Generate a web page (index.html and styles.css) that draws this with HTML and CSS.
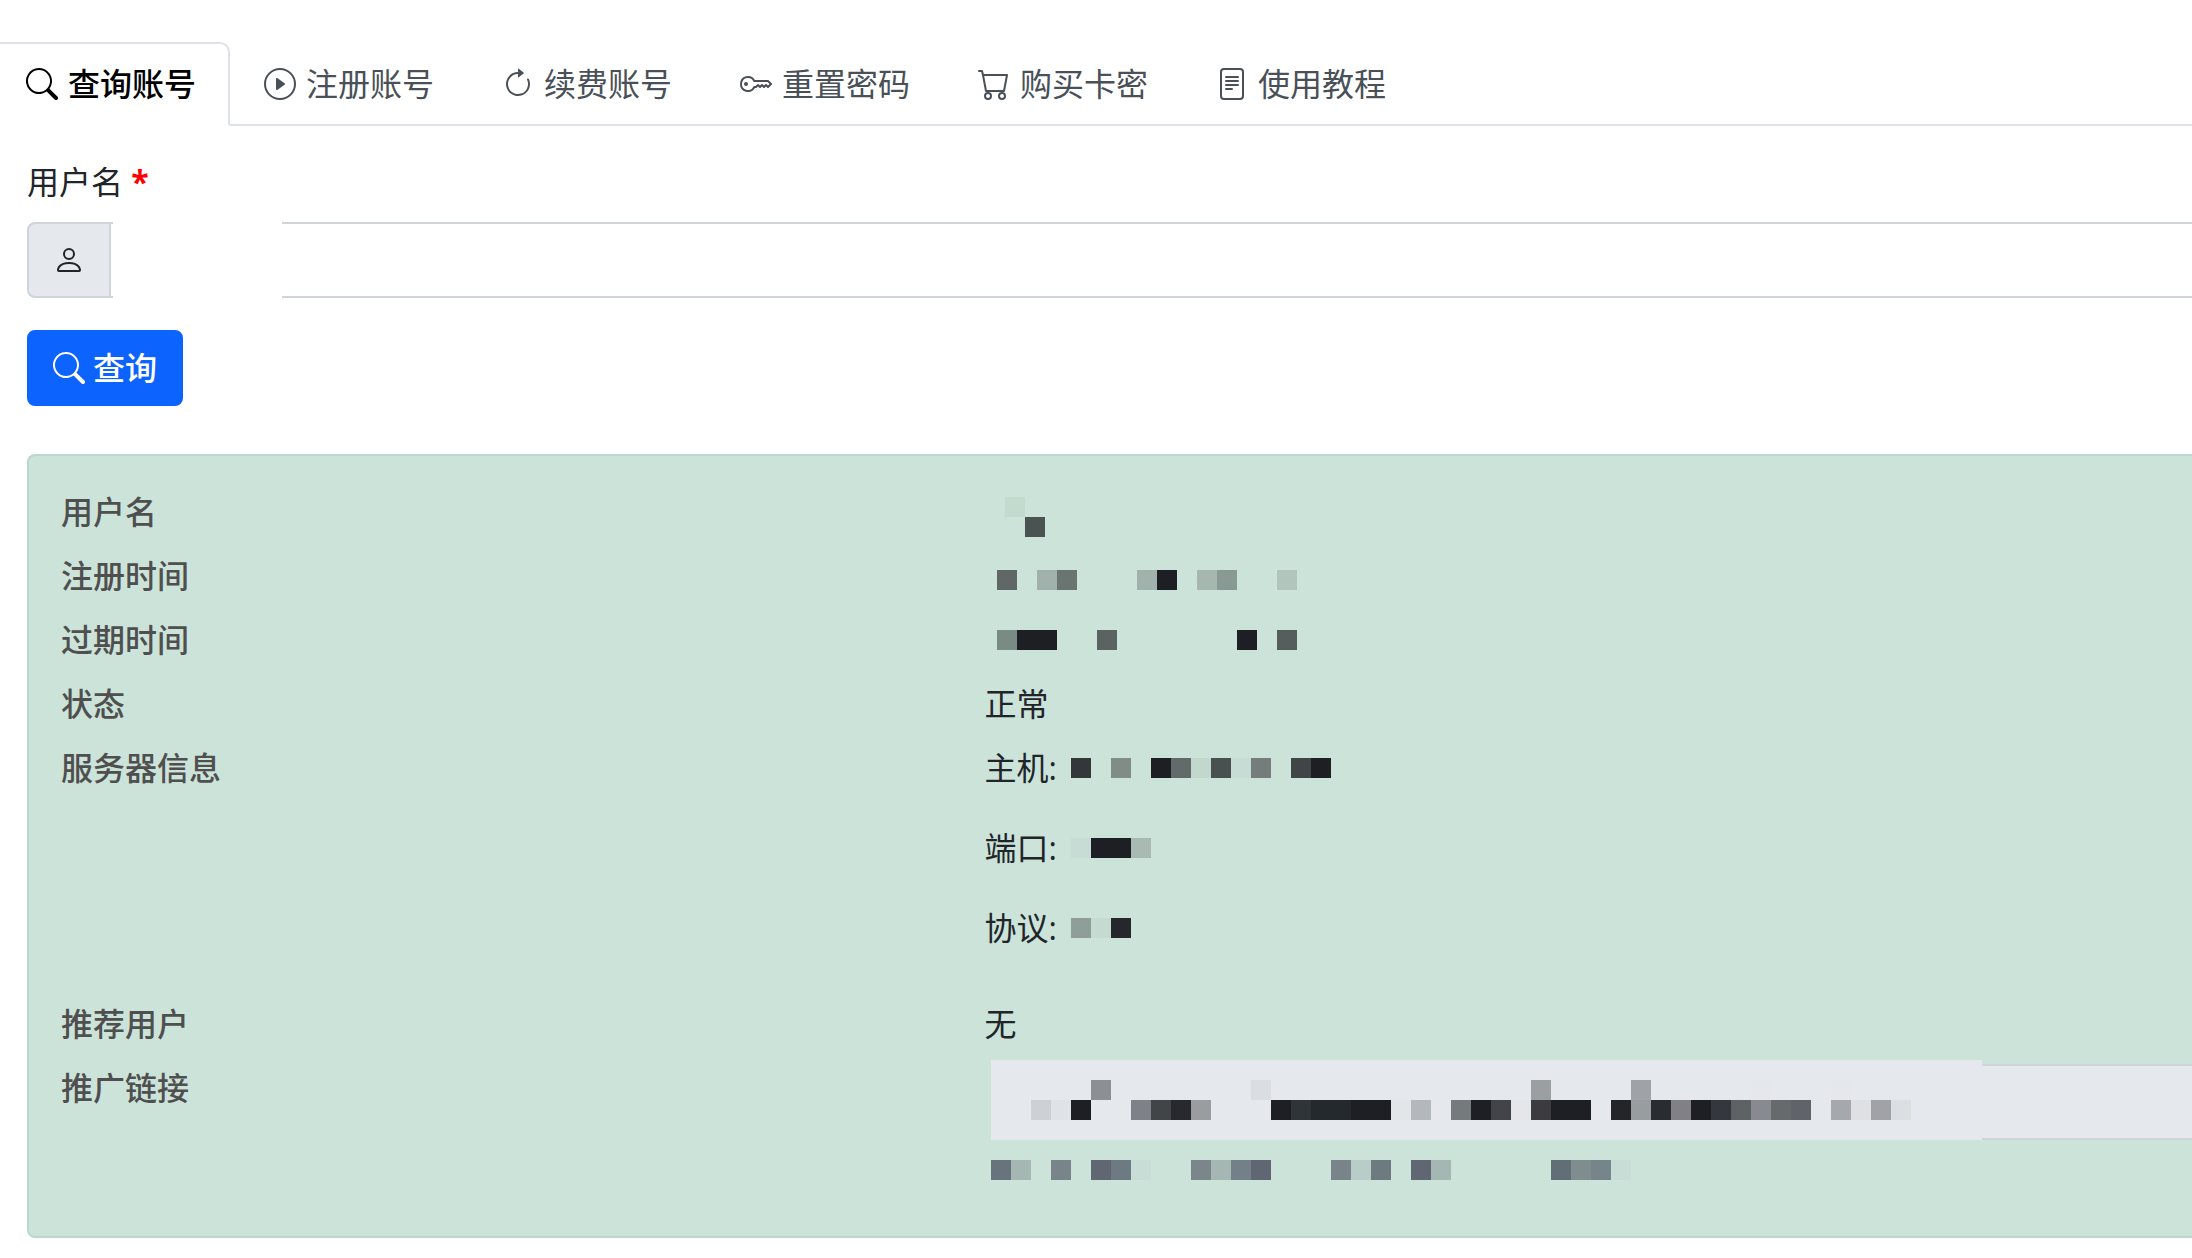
FILE: index.html
```html
<!DOCTYPE html>
<html lang="zh-CN">
<head>
    <meta charset="UTF-8">
    <meta name="viewport" content="width=device-width, initial-scale=1.0">
    <title>查询账号</title>
    <link rel="stylesheet" href="styles.css">
</head>
<body>
    <nav class="tabs">
        <a class="tab active" href="#query">
            <svg class="icon" viewBox="0 0 16 16"><path d="M11.742 10.344a6.5 6.5 0 1 0-1.397 1.398h-.001q.044.06.098.115l3.85 3.85a1 1 0 0 0 1.415-1.414l-3.85-3.85a1 1 0 0 0-.115-.1zM12 6.5a5.5 5.5 0 1 1-11 0 5.5 5.5 0 0 1 11 0"/></svg>
            <span>查询账号</span>
        </a>
        <a class="tab" href="#register">
            <svg class="icon" viewBox="0 0 16 16"><path d="M8 15A7 7 0 1 1 8 1a7 7 0 0 1 0 14m0 1A8 8 0 1 0 8 0a8 8 0 0 0 0 16"/><path d="M6.271 5.055a.5.5 0 0 1 .52.038l3.5 2.5a.5.5 0 0 1 0 .814l-3.5 2.5A.5.5 0 0 1 6 10.5v-5a.5.5 0 0 1 .271-.445"/></svg>
            <span>注册账号</span>
        </a>
        <a class="tab" href="#renew">
            <svg class="icon" viewBox="0 0 16 16"><path d="M8 3a5 5 0 1 0 4.546 2.914.5.5 0 0 1 .908-.417A6 6 0 1 1 8 2z"/><path d="M8 4.466V.534a.25.25 0 0 1 .41-.192l2.36 1.966c.12.1.12.284 0 .384L8.41 4.658A.25.25 0 0 1 8 4.466"/></svg>
            <span>续费账号</span>
        </a>
        <a class="tab" href="#reset">
            <svg class="icon" viewBox="0 0 16 16"><path d="M0 8a4 4 0 0 1 7.465-2H14a.5.5 0 0 1 .354.146l1.5 1.5a.5.5 0 0 1 0 .708l-1.5 1.5a.5.5 0 0 1-.708 0L13 9.207l-.646.647a.5.5 0 0 1-.708 0L11 9.207l-.646.647a.5.5 0 0 1-.708 0L9 9.207l-.646.647A.5.5 0 0 1 8 10h-.535A4 4 0 0 1 0 8m4-3a3 3 0 1 0 2.712 4.285A.5.5 0 0 1 7.163 9h.63l.853-.854a.5.5 0 0 1 .708 0l.646.647.646-.647a.5.5 0 0 1 .708 0l.646.647.646-.647a.5.5 0 0 1 .708 0l.646.647.793-.793-1-1h-6.63a.5.5 0 0 1-.451-.285A3 3 0 0 0 4 5"/><path d="M4 8a1 1 0 1 1-2 0 1 1 0 0 1 2 0"/></svg>
            <span>重置密码</span>
        </a>
        <a class="tab" href="#buy">
            <svg class="icon" viewBox="0 0 16 16"><path d="M0 1.5A.5.5 0 0 1 .5 1H2a.5.5 0 0 1 .485.379L2.89 3H14.5a.5.5 0 0 1 .491.592l-1.5 8A.5.5 0 0 1 13 12H4a.5.5 0 0 1-.491-.408L2.01 3.607 1.61 2H.5a.5.5 0 0 1-.5-.5M3.102 4l1.313 7h8.17l1.313-7zM5 12a2 2 0 1 0 0 4 2 2 0 0 0 0-4m7 0a2 2 0 1 0 0 4 2 2 0 0 0 0-4m-7 1a1 1 0 1 1 0 2 1 1 0 0 1 0-2m7 0a1 1 0 1 1 0 2 1 1 0 0 1 0-2"/></svg>
            <span>购买卡密</span>
        </a>
        <a class="tab" href="#guide">
            <svg class="icon" viewBox="0 0 16 16"><path d="M5 4a.5.5 0 0 0 0 1h6a.5.5 0 0 0 0-1zm-.5 2.5A.5.5 0 0 1 5 6h6a.5.5 0 0 1 0 1H5a.5.5 0 0 1-.5-.5M5 8a.5.5 0 0 0 0 1h6a.5.5 0 0 0 0-1zm0 2a.5.5 0 0 0 0 1h3a.5.5 0 0 0 0-1z"/><path d="M2 2a2 2 0 0 1 2-2h8a2 2 0 0 1 2 2v12a2 2 0 0 1-2 2H4a2 2 0 0 1-2-2zm10-1H4a1 1 0 0 0-1 1v12a1 1 0 0 0 1 1h8a1 1 0 0 0 1-1V2a1 1 0 0 0-1-1"/></svg>
            <span>使用教程</span>
        </a>
    </nav>

    <main class="content">
        <form id="queryForm">
            <label class="form-label" for="username">用户名 <span class="required">*</span></label>
            <div class="input-group">
                <span class="addon">
                    <svg class="icon" viewBox="0 0 16 16"><path d="M8 8a3 3 0 1 0 0-6 3 3 0 0 0 0 6m2-3a2 2 0 1 1-4 0 2 2 0 0 1 4 0m4 8c0 1-1 1-1 1H3s-1 0-1-1 1-4 6-4 6 3 6 4m-1-.004c-.001-.246-.154-.986-.832-1.664C11.516 10.68 10.289 10 8 10s-3.516.68-4.168 1.332c-.678.678-.83 1.418-.832 1.664z"/></svg>
                </span>
                <input class="form-control" type="text" id="username" name="username" required>
                <span class="mask"></span>
            </div>
            <button type="submit" class="btn">
                <svg class="icon" viewBox="0 0 16 16"><path d="M11.742 10.344a6.5 6.5 0 1 0-1.397 1.398h-.001q.044.06.098.115l3.85 3.85a1 1 0 0 0 1.415-1.414l-3.85-3.85a1 1 0 0 0-.115-.1zM12 6.5a5.5 5.5 0 1 1-11 0 5.5 5.5 0 0 1 11 0"/></svg>
                <span>查询</span>
            </button>
        </form>

        <dl class="result">
            <dt>用户名</dt>
            <dd>
                <svg class="mosaic">
                    <rect x="21" y="9" fill="#c3dbcf"/>
                    <rect x="41" y="29" fill="#4b5352"/>
                </svg>
            </dd>

            <dt>注册时间</dt>
            <dd>
                <svg class="mosaic">
                    <rect x="13" y="18" fill="#5f6867"/>
                    <rect x="53" y="18" fill="#a1b1ab"/>
                    <rect x="73" y="18" fill="#6a7572"/>
                    <rect x="153" y="18" fill="#a1b1ab"/>
                    <rect x="173" y="18" fill="#1e1f25"/>
                    <rect x="213" y="18" fill="#a5b7ae"/>
                    <rect x="233" y="18" fill="#899993"/>
                    <rect x="293" y="18" fill="#b1c5bc"/>
                </svg>
            </dd>

            <dt>过期时间</dt>
            <dd>
                <svg class="mosaic">
                    <rect x="13" y="14" fill="#7a8a84"/>
                    <rect x="33" y="14" fill="#1e1f25"/>
                    <rect x="53" y="14" fill="#1e1f25"/>
                    <rect x="113" y="14" fill="#5a6361"/>
                    <rect x="253" y="14" fill="#1e1f25"/>
                    <rect x="293" y="14" fill="#555e5d"/>
                </svg>
            </dd>

            <dt>状态</dt>
            <dd>正常</dd>

            <dt>服务器信息</dt>
            <dd class="server">
                <p>
                    <span>主机:</span>
                    <svg class="mosaic">
                        <rect x="6" y="14" fill="#333739"/>
                        <rect x="46" y="14" fill="#7f8c88"/>
                        <rect x="86" y="14" fill="#1e1f25"/>
                        <rect x="106" y="14" fill="#626a6a"/>
                        <rect x="126" y="14" fill="#c2d7ce"/>
                        <rect x="146" y="14" fill="#495150"/>
                        <rect x="166" y="14" fill="#c7dcd5"/>
                        <rect x="186" y="14" fill="#747d7c"/>
                        <rect x="226" y="14" fill="#3f4645"/>
                        <rect x="246" y="14" fill="#1e1f25"/>
                    </svg>
                </p>
                <p>
                    <span>端口:</span>
                    <svg class="mosaic">
                        <rect x="6" y="14" fill="#c7dcd5"/>
                        <rect x="26" y="14" fill="#1e1f25"/>
                        <rect x="46" y="14" fill="#1e1f25"/>
                        <rect x="66" y="14" fill="#a8bab2"/>
                    </svg>
                </p>
                <p>
                    <span>协议:</span>
                    <svg class="mosaic">
                        <rect x="6" y="14" fill="#8f9e99"/>
                        <rect x="26" y="14" fill="#c5dad1"/>
                        <rect x="46" y="14" fill="#24282a"/>
                    </svg>
                </p>
            </dd>

            <dt>推荐用户</dt>
            <dd>无</dd>

            <dt><label for="link">推广链接</label></dt>
            <dd class="promo">
                <input class="form-control" type="text" id="link" readonly>
                <svg class="link-mask" viewBox="0 0 1000 80">
                    <path fill="#cce3d9" d="M0 0h7v80H0z"/>
                    <path fill="#e5e8ed" d="M7 0h991v80H7z"/>
                    <rect x="107" y="20" fill="#8c9093"/>
                    <rect x="267" y="20" fill="#d9dee0"/>
                    <rect x="547" y="20" fill="#9a9fa1"/>
                    <rect x="647" y="20" fill="#9fa2a7"/>
                    <rect x="767" y="20" fill="#e6e7ea"/>
                    <rect x="847" y="20" fill="#e6e7ea"/>
                    <rect x="47" y="40" fill="#cdd1d6"/>
                    <rect x="67" y="40" fill="#dfe3e8"/>
                    <rect x="87" y="40" fill="#1e1f25"/>
                    <rect x="147" y="40" fill="#7e8187"/>
                    <rect x="167" y="40" fill="#414548"/>
                    <rect x="187" y="40" fill="#27292e"/>
                    <rect x="207" y="40" fill="#999da0"/>
                    <rect x="287" y="40" fill="#1e1f25"/>
                    <rect x="307" y="40" fill="#2f3438"/>
                    <rect x="327" y="40" fill="#23292c"/>
                    <rect x="347" y="40" fill="#23292c"/>
                    <rect x="367" y="40" fill="#1e1f25"/>
                    <rect x="387" y="40" fill="#1e1f25"/>
                    <rect x="407" y="40" fill="#e2e6e9"/>
                    <rect x="427" y="40" fill="#b3b8bc"/>
                    <rect x="467" y="40" fill="#757a7d"/>
                    <rect x="487" y="40" fill="#1e1f25"/>
                    <rect x="507" y="40" fill="#434449"/>
                    <rect x="527" y="40" fill="#e3e7e9"/>
                    <rect x="547" y="40" fill="#3b3b40"/>
                    <rect x="567" y="40" fill="#1e1f25"/>
                    <rect x="587" y="40" fill="#1e1f25"/>
                    <rect x="627" y="40" fill="#242529"/>
                    <rect x="647" y="40" fill="#989d9f"/>
                    <rect x="667" y="40" fill="#292d32"/>
                    <rect x="687" y="40" fill="#808086"/>
                    <rect x="707" y="40" fill="#1e1f25"/>
                    <rect x="727" y="40" fill="#34373d"/>
                    <rect x="747" y="40" fill="#5d6264"/>
                    <rect x="767" y="40" fill="#888a91"/>
                    <rect x="787" y="40" fill="#666a6d"/>
                    <rect x="807" y="40" fill="#606369"/>
                    <rect x="847" y="40" fill="#a5a9ad"/>
                    <rect x="867" y="40" fill="#dfe0e4"/>
                    <rect x="887" y="40" fill="#a1a2a8"/>
                    <rect x="907" y="40" fill="#dcdfe2"/>
                </svg>
                <svg class="mosaic help">
                    <rect x="7" y="12" fill="#68737b"/>
                    <rect x="27" y="12" fill="#a5b7b3"/>
                    <rect x="67" y="12" fill="#79848a"/>
                    <rect x="107" y="12" fill="#606672"/>
                    <rect x="127" y="12" fill="#6e7a81"/>
                    <rect x="147" y="12" fill="#c7ddd5"/>
                    <rect x="207" y="12" fill="#7b868b"/>
                    <rect x="227" y="12" fill="#a5b7b3"/>
                    <rect x="247" y="12" fill="#748087"/>
                    <rect x="267" y="12" fill="#606672"/>
                    <rect x="347" y="12" fill="#78838a"/>
                    <rect x="367" y="12" fill="#b9cdc8"/>
                    <rect x="387" y="12" fill="#6d7a7f"/>
                    <rect x="427" y="12" fill="#606672"/>
                    <rect x="447" y="12" fill="#a5b7b3"/>
                    <rect x="567" y="12" fill="#626e76"/>
                    <rect x="587" y="12" fill="#7f8d8e"/>
                    <rect x="607" y="12" fill="#76858a"/>
                    <rect x="627" y="12" fill="#c7ddd5"/>
                </svg>
            </dd>
        </dl>
    </main>
</body>
</html>
```

FILE: styles.css
```css
* {
    margin: 0;
    padding: 0;
    box-sizing: border-box;
}

body {
    font-family: "Open Sans", "Noto Sans CJK SC", sans-serif;
    font-size: 32px;
    line-height: 48px;
    color: #212529;
    background: white;
    padding-top: 42px;
    overflow-x: hidden;
}

input, button {
    font: inherit;
}

.icon {
    width: 32px;
    height: 32px;
    fill: currentColor;
    flex: none;
}

/* tabs */
.tabs {
    display: flex;
    margin-left: -8px;
    box-shadow: inset 0 -2px #dee2e6;
}

.tab {
    display: flex;
    align-items: center;
    gap: 10px;
    padding: 16px 32px;
    border: 2px solid transparent;
    border-radius: 10px 10px 0 0;
    color: #495057;
    text-decoration: none;
}

.tab.active {
    color: black;
    font-weight: 500;
    background: white;
    border-color: #dee2e6;
    border-bottom-color: white;
}

.content {
    padding: 32px 0 16px 27px;
}

/* query form */
.form-label {
    display: block;
    margin-bottom: 16px;
}

.required {
    color: red;
    font-weight: bold;
}

.input-group {
    position: relative;
    display: flex;
    margin-bottom: 32px;
}

.addon {
    display: flex;
    align-items: center;
    padding: 0 24px;
    background: #e5e8ed;
    border: 2px solid #ced4da;
    border-radius: 8px 0 0 8px;
}

.form-control {
    width: 100%;
    height: 76px;
    padding: 12px 24px;
    border: 2px solid #ced4da;
    border-width: 2px 0;
    outline: none;
}

/* hides the stored name */
.mask {
    position: absolute;
    top: 0;
    left: 86px;
    width: 169px;
    height: 100%;
    background: white;
}

.btn {
    display: flex;
    align-items: center;
    gap: 8px;
    padding: 12px 24px;
    color: white;
    font-weight: 500;
    background: #0d63fd;
    border: 2px solid #0d63fd;
    border-radius: 8px;
    cursor: pointer;
}

/* account details */
.result {
    display: grid;
    grid-template-columns: 13fr 17fr;
    row-gap: 16px;
    margin-top: 48px;
    padding: 32px 0 46px 32px;
    background: #cce3d9;
    border: 2px solid #b8d9cb;
    border-right: 0;
    border-radius: 8px 0 0 8px;
}

dt {
    font-weight: 500;
    color: #4f4f4f;
}

.server p {
    display: flex;
    gap: 8px;
    margin-bottom: 32px;
}

.server span {
    flex: none;
}

.mosaic {
    display: block;
    width: 100%;
    height: 48px;
    overflow: visible;
}

.mosaic rect, .link-mask rect {
    width: 20px;
    height: 20px;
}

.promo {
    position: relative;
}

.promo .form-control {
    display: block;
    background: #e5e8ed;
    border-left-width: 2px;
}

.link-mask {
    position: absolute;
    top: -4px;
    left: 0;
    width: 1000px;
    height: 80px;
}

.help {
    height: 42px;
    margin-top: 8px;
}
```
